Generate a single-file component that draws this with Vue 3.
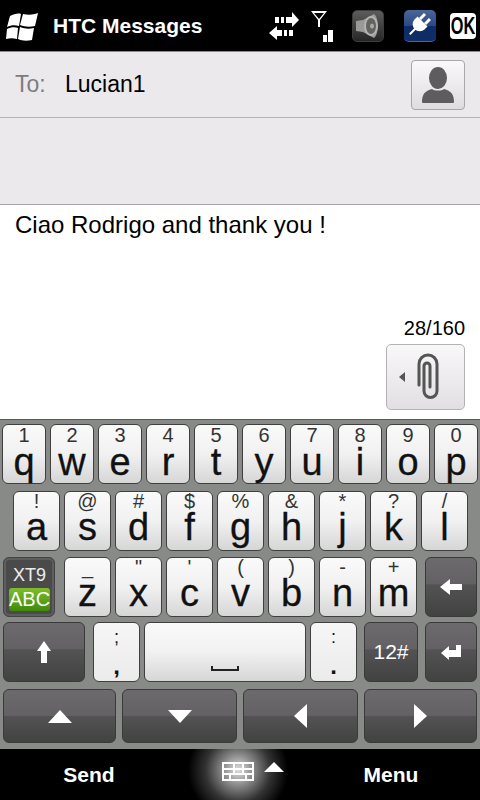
<script setup>
const row1 = [
  ['1', 'q'], ['2', 'w'], ['3', 'e'], ['4', 'r'], ['5', 't'],
  ['6', 'y'], ['7', 'u'], ['8', 'i'], ['9', 'o'], ['0', 'p']
]
const row2 = [
  ['!', 'a'], ['@', 's'], ['#', 'd'], ['$', 'f'], ['%', 'g'],
  ['&', 'h'], ['*', 'j'], ['?', 'k'], ['/', 'l']
]
const row3 = [
  ['_', 'z'], ['"', 'x'], ["'", 'c'], ['(', 'v'], [')', 'b'], ['-', 'n'], ['+', 'm']
]
</script>

<template>
  <div class="screen">
    <header class="topbar">
      <svg class="flag" width="32" height="29" viewBox="0 0 32 29">
        <path d="M4 4c4-2 8-3 11-2l-2 12c-4-1-8-1-12 1z" fill="#fff" />
        <path d="M17 2c5 1 10 1 15-1l-3 13c-5 1-10 1-15-1z" fill="#fff" />
        <path d="M1 17c4-2 8-2 11-1l-1 11c-4-1-7-1-11 0z" fill="#fff" />
        <path d="M14 15c5 2 9 2 14 1l-2 12c-5 1-10 1-14-1z" fill="#fff" />
      </svg>
      <span class="app-title">HTC Messages</span>
      <svg class="st-arrows" width="32" height="32" viewBox="0 0 32 32">
        <path d="M7 7h4v6H7zM13 7h3v6h-3zM18 7h6V2l7 8-7 7v-4h-6z" fill="#fff" />
        <path d="M1 23l8-7v4h5v6H9v4zM16 20h3v6h-3zM21 20h4v6h-4z" fill="#fff" />
      </svg>
      <svg class="st-signal" width="24" height="32" viewBox="0 0 24 32">
        <path d="M1 0h16l-7 9v7H8V9zM4 2l5 6 5-6z" fill="#fff" fill-rule="evenodd" />
        <rect x="13" y="24" width="4" height="7" fill="#fff" />
        <rect x="18" y="19" width="5" height="12" fill="#fff" />
      </svg>
      <div class="tile tile-sound">
        <svg width="32" height="32" viewBox="0 0 32 32">
          <path d="M4 11l7-1 11-6c5 3 5 21 0 24l-11-6-7-1z" fill="#9a9b99" />
          <ellipse cx="19" cy="16" rx="7" ry="10" fill="#b4b5b3" />
          <ellipse cx="19" cy="16" rx="5" ry="8" fill="#636462" />
          <ellipse cx="20" cy="16" rx="2" ry="2.500" fill="#a8a9a7" />
        </svg>
      </div>
      <div class="tile tile-power">
        <svg width="32" height="32" viewBox="0 0 32 32">
          <g transform="rotate(45 16 16)">
            <rect x="11" y="4" width="3" height="7" fill="#fff" />
            <rect x="18" y="4" width="3" height="7" fill="#fff" />
            <path d="M9 11h14v4a7 7 0 0 1-14 0z" fill="#fff" />
            <rect x="15" y="20" width="2" height="9" fill="#fff" />
          </g>
        </svg>
      </div>
      <div class="ok"><span class="ok-text">OK</span></div>
    </header>

    <section class="recipient">
      <div class="to-row">
        <span class="to-label">To:</span>
        <span class="to-name">Lucian1</span>
        <button class="contact-btn">
          <svg width="34" height="38" viewBox="0 0 34 38">
            <ellipse cx="17" cy="12" rx="9" ry="11" fill="#5e5c5e" />
            <path d="M1 36c0-8 3-11 10-13 2 2 10 2 12 0 7 2 10 5 10 13 0 1-1 1-2 1H3c-1 0-2 0-2-1z" fill="#5e5c5e" />
          </svg>
        </button>
      </div>
    </section>

    <section class="compose">
      <p class="message">Ciao Rodrigo and thank you !</p>
      <div class="compose-foot">
        <span class="counter">28/160</span>
        <button class="attach-btn">
          <span class="attach-arrow"></span>
          <svg width="24" height="48" viewBox="0 0 24 48">
            <path d="M3 32V11a9 9 0 0 1 18 0v27a6.500 6.500 0 0 1-13 0V13a3 3 0 0 1 6 0v21" fill="none" stroke="#555" stroke-width="3" stroke-linecap="round" />
          </svg>
        </button>
      </div>
    </section>

    <section class="keyboard">
      <div class="kb-row row-q">
        <div v-for="k in row1" :key="k[1]" class="key key-r1">
          <span class="sym sym-q">{{ k[0] }}</span>
          <span class="letter">{{ k[1] }}</span>
        </div>
      </div>
      <div class="kb-row row-a">
        <div v-for="k in row2" :key="k[1]" class="key key-r2">
          <span class="sym">{{ k[0] }}</span>
          <span class="letter">{{ k[1] }}</span>
        </div>
      </div>
      <div class="kb-row row-z">
        <div class="xt9-key">
          <span class="xt9">XT9</span>
          <span class="abc">ABC</span>
        </div>
        <div class="z-keys">
          <div v-for="k in row3" :key="k[1]" class="key key-r2">
            <span class="sym">{{ k[0] }}</span>
            <span class="letter">{{ k[1] }}</span>
          </div>
        </div>
        <div class="key dark key-side">
          <svg width="22" height="16" viewBox="0 0 22 16">
            <path d="M0 8l10-8v5h12v6H10v5z" fill="#fff" />
          </svg>
        </div>
      </div>
      <div class="kb-row row-space">
        <div class="key dark key-shift">
          <svg width="16" height="22" viewBox="0 0 16 22">
            <path d="M8 0l7 10h-4v12H5V10H1z" fill="#fff" />
          </svg>
        </div>
        <div class="key key-punct">
          <span class="p-top">;</span>
          <span class="p-bottom">,</span>
        </div>
        <div class="key key-space">
          <svg width="28" height="5" viewBox="0 0 28 5">
            <path d="M0 0h2v3h24V0h2v5H0z" fill="#222" />
          </svg>
        </div>
        <div class="key key-punct">
          <span class="p-top">:</span>
          <span class="p-bottom">.</span>
        </div>
        <div class="key dark key-num">12#</div>
        <div class="key dark key-side">
          <svg width="20" height="16" viewBox="0 0 20 16">
            <path d="M0 9l8-7v4h7V1h5v12H8v3z" fill="#fff" />
          </svg>
        </div>
      </div>
      <div class="kb-row row-nav">
        <div class="key dark key-nav nav-a">
          <svg width="24" height="13" viewBox="0 0 24 13"><path d="M12 0l12 13H0z" fill="#fff" /></svg>
        </div>
        <div class="key dark key-nav nav-b">
          <svg width="24" height="13" viewBox="0 0 24 13"><path d="M0 0h24L12 13z" fill="#fff" /></svg>
        </div>
        <div class="key dark key-nav nav-c">
          <svg width="13" height="24" viewBox="0 0 13 24"><path d="M13 0v24L0 12z" fill="#fff" /></svg>
        </div>
        <div class="key dark key-nav nav-d">
          <svg width="13" height="24" viewBox="0 0 13 24"><path d="M0 0l13 12L0 24z" fill="#fff" /></svg>
        </div>
      </div>
    </section>

    <footer class="softkeys">
      <span class="soft soft-send">Send</span>
      <div class="sip">
        <svg width="32" height="19" viewBox="0 0 32 19">
          <path d="M0 0h32v19H0zM2 2v4h9V2zM13 2v4h7V2zM22 2v4h8V2zM2 8v3h9V8zM13 8v3h7V8zM22 8v3h8V8zM2 13v4h5v-4zM9 13v4h14v-4zM25 13v4h5v-4z" fill="#fff" fill-rule="evenodd" />
        </svg>
        <svg class="sip-arrow" width="20" height="10" viewBox="0 0 20 10">
          <path d="M10 0l10 10H0z" fill="#fff" />
        </svg>
      </div>
      <span class="soft soft-menu">Menu</span>
    </footer>
  </div>
</template>

<style scoped>
.screen {
  width: 480px;
  height: 800px;
  display: flex;
  flex-direction: column;
  overflow: hidden;
  font-family: "Liberation Sans", Arial, sans-serif;
  background: #fff;
}

.topbar {
  height: 51px;
  flex: none;
  background: #000;
  display: flex;
  align-items: center;
  padding-left: 6px;
  box-sizing: border-box;
}

.flag {
  flex: none;
  margin-top: 2px;
}

.app-title {
  margin-left: 15px;
  width: 215px;
  flex: none;
  color: #fff;
  font-size: 21px;
  font-weight: bold;
}

.st-arrows {
  flex: none;
}

.st-signal {
  margin-left: 10px;
  margin-top: 2px;
  flex: none;
}

.tile {
  width: 32px;
  height: 32px;
  border-radius: 5px;
  flex: none;
  overflow: hidden;
  box-sizing: border-box;
}

.tile-sound {
  margin-left: 18px;
  background: linear-gradient(#5c5c5c, #262626);
  border: 1px solid #3c3c3c;
}

.tile-sound svg,
.tile-power svg {
  display: block;
  margin: -1px;
}

.tile-power {
  margin-left: 20px;
  background: linear-gradient(#4a6699, #2b4a85 50%, #0f2c6b 51%, #102d66);
  border-bottom: 1px solid #3d66b5;
}

.ok {
  margin-left: 14px;
  width: 26px;
  height: 26px;
  background: #fff;
  color: #000;
  border-radius: 4px;
  font-size: 24px;
  font-weight: bold;
  line-height: 26px;
  text-align: center;
  flex: none;
  overflow: hidden;
}

.ok-text {
  display: inline-block;
  transform: scaleX(0.68);
  margin: 0 -10px;
}

.recipient {
  height: 154px;
  flex: none;
  box-sizing: border-box;
  background: #ece9ec;
  border-top: 1px solid #8a8a8a;
  border-bottom: 1px solid #a8a6a8;
}

.to-row {
  height: 66px;
  display: flex;
  align-items: center;
  padding: 0 15px;
  box-sizing: border-box;
  border-bottom: 1px solid #b4b2b4;
}

.to-label {
  color: #7e7c7e;
  font-size: 23px;
  width: 50px;
}

.to-name {
  color: #000;
  font-size: 23px;
  flex: 1;
}

.contact-btn {
  width: 54px;
  height: 50px;
  padding: 0;
  border: 1px solid #a8a6a8;
  border-radius: 4px;
  background: linear-gradient(#faf9fa, #dfdcdf);
  display: flex;
  align-items: center;
  justify-content: center;
}

.compose {
  height: 214px;
  flex: none;
  background: #fff;
  display: flex;
  flex-direction: column;
  box-sizing: border-box;
}

.message {
  margin: 0;
  padding: 7px 15px 0;
  font-size: 24px;
  line-height: 26px;
  color: #000;
  flex: 1;
}

.compose-foot {
  display: flex;
  flex-direction: column;
  align-items: flex-end;
  padding: 0 15px 9px 0;
}

.counter {
  font-size: 20px;
  line-height: 22px;
  color: #000;
  margin-bottom: 5px;
}

.attach-btn {
  width: 79px;
  height: 66px;
  padding: 0 0 0 12px;
  box-sizing: border-box;
  border: 1px solid #b4b2b4;
  border-radius: 5px;
  background: linear-gradient(#f9f8f9, #e2dfe2);
  display: flex;
  align-items: center;
  gap: 11px;
}

.attach-arrow {
  width: 0;
  height: 0;
  border-top: 5px solid transparent;
  border-bottom: 5px solid transparent;
  border-right: 6px solid #555;
}

.keyboard {
  height: 330px;
  flex: none;
  box-sizing: border-box;
  background: #888a87;
  border-top: 1px solid #5a5a5a;
  padding: 4px 3px 0 2px;
  display: flex;
  flex-direction: column;
}

.kb-row {
  display: flex;
  gap: 4px;
}

.row-q {
  margin-bottom: 7px;
}

.row-a {
  padding-left: 11px;
  margin-bottom: 6px;
}

.row-z {
  gap: 0;
  padding-left: 1px;
  margin-bottom: 5px;
}

.z-keys {
  display: flex;
  gap: 4px;
  margin: 0 8px 0 9px;
}

.row-space {
  padding-left: 1px;
  margin-bottom: 7px;
}

.row-nav {
  padding-left: 1px;
  gap: 6px;
}

.key {
  box-sizing: border-box;
  flex: none;
  height: 60px;
  border: 1px solid #3f3f3f;
  border-radius: 6px;
  background: linear-gradient(#fafafa, #f1f1f1 50%, #d6d6d6);
  display: flex;
  flex-direction: column;
  align-items: center;
  color: #111;
}

.key-r1 {
  width: 44px;
}

.key-r2 {
  width: 47px;
}

.sym {
  font-size: 20px;
  line-height: 18px;
  height: 18px;
  color: #333;
}

.sym-q {
  line-height: 19px;
  height: 19px;
  margin-top: 1px;
}

.letter {
  font-size: 38px;
  line-height: 34px;
  color: #111;
  -webkit-text-stroke: 0.3px #111;
}

.xt9-key {
  width: 52px;
  height: 60px;
  box-sizing: border-box;
  flex: none;
  border: 1px solid #444;
  border-radius: 6px;
  background: #4b4a4b;
  box-shadow: inset 0 0 0 2px #5f5e5f;
  padding: 4px 4px 4px 5px;
  display: flex;
  flex-direction: column;
  align-items: stretch;
  text-align: center;
}

.xt9 {
  color: #eee;
  font-size: 18px;
  line-height: 26px;
}

.abc {
  height: 23px;
  background: linear-gradient(#7fbe2a, #3f8a0c);
  border-radius: 3px;
  color: #fff;
  font-size: 20px;
  line-height: 23px;
}

.dark {
  background: linear-gradient(#6c6a6c, #636163 45%, #545354 46%, #434243);
  border-color: #3a3a3a;
  justify-content: center;
  color: #fff;
}

.key-side {
  width: 52px;
}

.key-shift {
  width: 82px;
  margin-right: 4px;
}

.key-punct {
  width: 47px;
  background: linear-gradient(#f6f6f6, #ebebeb);
}

.key-space {
  width: 162px;
  justify-content: flex-end;
  padding-bottom: 10px;
}

.key-num {
  width: 54px;
  font-size: 21px;
  margin: 0 3px;
}

.p-top {
  font-size: 18px;
  line-height: 20px;
  margin-top: 4px;
}

.p-bottom {
  font-size: 24px;
  line-height: 22px;
  margin-top: 8px;
  font-weight: bold;
}

.key-nav {
  height: 54px;
  background: linear-gradient(#6c6a6c, #636163 50%, #545354 51%, #434243);
}

.nav-a {
  width: 113px;
}

.nav-b {
  width: 115px;
}

.nav-c {
  width: 115px;
}

.nav-d {
  width: 113px;
}

.softkeys {
  flex: 1;
  background: #000;
  display: flex;
  align-items: center;
}

.soft {
  color: #fff;
  font-size: 21px;
  font-weight: bold;
  text-align: center;
  flex: none;
  width: 178px;
}

.sip {
  width: 124px;
  height: 51px;
  flex: none;
  display: flex;
  align-items: flex-start;
  padding: 13px 0 0 44px;
  box-sizing: border-box;
  gap: 10px;
  background: radial-gradient(circle 50px at 60px 21px, #e0e0e0, #8c8c8c 30%, #333 65%, #000 100%);
}
</style>

<style>
html,
body {
  margin: 0;
  background: #000;
}
</style>
